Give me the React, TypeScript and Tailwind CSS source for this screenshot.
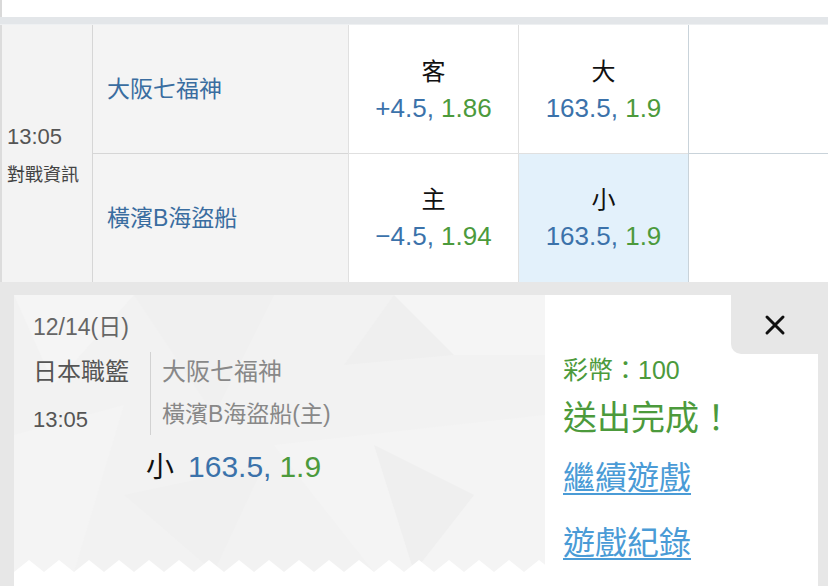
import React from "react";

const Odds = ({ a, b }: { a: string; b: string }) => (
  <div className="text-[26px] leading-[37px]">
    <span className="text-[#3b72aa]">{a}, </span>
    <span className="text-[#4c9a3c]">{b}</span>
  </div>
);

const Pattern = () => (
  <svg className="absolute inset-0 h-full w-full" viewBox="0 0 531 277" preserveAspectRatio="none">
    <polygon points="0,0 120,0 40,90" fill="#f5f5f5" />
    <polygon points="120,0 260,0 200,120" fill="#f0f0f0" />
    <polygon points="380,0 531,0 531,60 440,60" fill="#f5f5f5" />
    <polygon points="380,0 440,60 330,70" fill="#efefef" />
    <polygon points="0,140 110,110 60,277 0,277" fill="#f4f4f4" />
    <polygon points="260,150 531,120 531,277 360,277" fill="#f4f4f4" />
    <polygon points="360,150 460,200 400,277" fill="#efefef" />
    <polygon points="110,200 250,170 200,277" fill="#f0f0f0" />
  </svg>
);

const Zigzag = () => {
  const pts: string[] = ["0,12"];
  for (let x = 0; x <= 531; x += 30) {
    pts.push(`${x},12`, `${x + 15},0`, `${x + 30},12`);
  }
  pts.push("531,12");
  return (
    <svg className="absolute bottom-0 left-0 h-[12px] w-full" viewBox="0 0 531 12" preserveAspectRatio="none">
      <polygon points={pts.join(" ")} fill="#ffffff" />
    </svg>
  );
};

export default function App() {
  return (
    <div className="flex h-[586px] w-[828px] flex-col overflow-hidden bg-white font-['Liberation_Sans','Noto_Sans_CJK_TC',sans-serif]">
      <div className="h-[17px] shrink-0 border-l-2 border-[#d9d9d9] bg-white" />
      <div className="h-[8px] shrink-0 border-b border-[#eef0f2] bg-[#e3e6e9]" />
      <div className="grid shrink-0 grid-cols-[92px_256px_170px_170px_1fr] grid-rows-[129px_128px]">
        <div className="row-span-2 flex flex-col justify-center border-l-2 border-[#dcdcdc] bg-[#f3f3f3] pl-[5px]">
          <div className="mt-[2px] text-[22px] leading-[26px] text-[#555]">13:05</div>
          <div className="mt-[14px] text-[18px] leading-[22px] text-[#444]">對戰資訊</div>
        </div>
        <div className="flex items-center border-b border-l border-[#d6d6d6] bg-[#f4f4f4] pl-[14px] text-[23px] text-[#3a6da0]">
          大阪七福神
        </div>
        <div className="flex flex-col items-center justify-center border-b border-l border-[#e0e0e0] pt-[1px]">
          <div className="text-[24px] leading-[37px] text-[#111]">客</div>
          <Odds a="+4.5" b="1.86" />
        </div>
        <div className="flex flex-col items-center justify-center border-b border-l border-[#e0e0e0] pt-[1px]">
          <div className="text-[24px] leading-[37px] text-[#111]">大</div>
          <Odds a="163.5" b="1.9" />
        </div>
        <div className="border-b border-l border-[#c9d3da]" />
        <div className="flex items-center border-l border-[#d6d6d6] bg-[#f4f4f4] pl-[14px] text-[23px] text-[#3a6da0]">
          橫濱B海盜船
        </div>
        <div className="flex flex-col items-center justify-center border-l border-[#e0e0e0]">
          <div className="text-[24px] leading-[36px] text-[#111]">主</div>
          <Odds a="−4.5" b="1.94" />
        </div>
        <div className="flex flex-col items-center justify-center border-l border-[#e0e0e0] bg-[#e3f1fb]">
          <div className="text-[24px] leading-[36px] text-[#111]">小</div>
          <Odds a="163.5" b="1.9" />
        </div>
        <div className="border-l border-[#c9d3da]" />
      </div>
      <div className="flex flex-1 bg-[#e7e7e7] pl-[14px] pr-[10px] pt-[13px]">
        <div className="flex flex-1 bg-white">
          <div className="w-[531px] shrink-0">
            <div className="relative h-[277px] overflow-hidden bg-[#f2f2f2]">
              <Pattern />
              <Zigzag />
              <div className="relative pl-[19px]">
                <div className="mt-[17px] text-[23px] leading-[30px] text-[#666]">12/14(日)</div>
                <div className="mt-[10px] flex">
                  <div className="w-[117px]">
                    <div className="text-[24px] leading-[40px] text-[#555]">日本職籃</div>
                    <div className="mt-[8px] text-[22px] leading-[40px] text-[#555]">13:05</div>
                  </div>
                  <div className="h-[83px] border-l border-[#d2d2d2] pl-[11px]">
                    <div className="text-[24px] leading-[40px] text-[#888]">大阪七福神</div>
                    <div className="mt-[2px] text-[23px] leading-[40px] text-[#888]">橫濱B海盜船(主)</div>
                  </div>
                </div>
                <div className="ml-[113px] mt-[7px] flex items-baseline leading-[40px]">
                  <span className="text-[28px] text-[#111]">小</span>
                  <span className="ml-[14px] text-[30px] text-[#3b72aa]">163.5, </span>
                  <span className="ml-[8px] text-[30px] text-[#4c9a3c]">1.9</span>
                </div>
              </div>
            </div>
          </div>
          <div className="relative flex-1 bg-white pl-[18px]">
            <div className="absolute right-0 top-0 flex h-[59px] w-[87px] items-center justify-center rounded-bl-[10px] bg-[#e7e7e7]">
              <svg width="22" height="22" viewBox="0 0 22 22">
                <path d="M3 3 L19 19 M19 3 L3 19" stroke="#111" strokeWidth="3" strokeLinecap="round" />
              </svg>
            </div>
            <div className="mt-[58px] text-[25px] leading-[34px] text-[#4c9a3c]">彩幣：100</div>
            <div className="mt-[9px] text-[34px] leading-[44px] text-[#4c9a3c]">送出完成！</div>
            <div className="mt-[16px] text-[32px] leading-[44px] text-[#4a9bd6] underline decoration-2 underline-offset-4">繼續遊戲</div>
            <div className="mt-[21px] text-[32px] leading-[44px] text-[#4a9bd6] underline decoration-2 underline-offset-4">遊戲紀錄</div>
          </div>
        </div>
      </div>
    </div>
  );
}
